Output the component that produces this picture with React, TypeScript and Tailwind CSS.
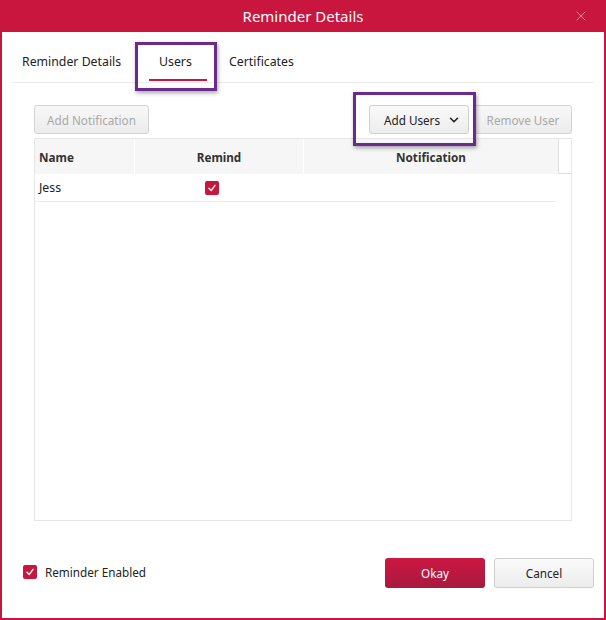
import React from 'react';
import { ChevronDown, X } from 'lucide-react';

const font = { fontFamily: '"Segoe UI", "Noto Sans", sans-serif' };

const Check: React.FC = () => (
    <div className="w-[14px] h-[14px] rounded-[2px] bg-[#c8163f] flex items-center justify-center">
        <svg width="10" height="10" viewBox="0 0 10 10">
            <path d="M2 5.2 L4.2 7.6 L8 2.4" fill="none" stroke="white" strokeWidth="1.4" strokeLinecap="round" strokeLinejoin="round" />
        </svg>
    </div>
);

const App: React.FC = () => {
    return (
        <div className="relative w-[606px] h-[620px] flex flex-col bg-white text-[12.3px] leading-[18px] text-[#222]" style={font}>
            {/* title bar */}
            <div className="relative h-[32px] bg-[#c8163f] flex items-center justify-center text-white text-[15px]">
                Reminder Details
                <X size={16} strokeWidth={1.2} className="absolute right-[17px] top-[8px] text-[#f2a6b8]" />
            </div>

            <div className="flex-1 flex flex-col border-x-2 border-b-2 border-[#c8163f] px-[10px]">
                {/* tabs */}
                <div className="h-[51px] flex items-start pt-[21px] border-b border-[#ececec]">
                    <div className="w-[119px] pl-[10px]">Reminder Details</div>
                    <div className="relative ml-[18px] w-[58px] pl-[10px]">
                        Users
                        <div className="absolute top-[26px] left-0 right-0 h-[2px] bg-[#c8163f]" />
                    </div>
                    <div className="ml-[12px] px-[10px]">Certificates</div>
                </div>

                {/* toolbar */}
                <div className="mt-[22px] px-[22px] flex items-center whitespace-nowrap text-[11.7px]">
                    <button className="h-[29px] w-[115px] rounded-[3px] border border-[#d4d4d4] bg-gradient-to-b from-[#f8f8f8] to-[#ececec] text-[#a8a8a8]">
                        Add Notification
                    </button>
                    <div className="flex-1" />
                    <button className="h-[29px] w-[100px] rounded-[3px] border border-[#cfcfcf] bg-gradient-to-b from-[#fafafa] to-[#ececec] flex items-center justify-between pl-[14px] pr-[7px]">
                        <span>Add Users</span>
                        <ChevronDown size={14} strokeWidth={2.8} />
                    </button>
                    <button className="ml-[5px] h-[29px] w-[98px] rounded-[3px] border border-[#d4d4d4] bg-gradient-to-b from-[#f8f8f8] to-[#ececec] text-[#a8a8a8]">
                        Remove User
                    </button>
                </div>

                {/* table */}
                <div className="mt-[4px] mx-[22px] h-[383px] border border-[#e6e6e6] flex flex-col">
                    <div className="h-[35px] flex font-bold text-[#333] text-[11.7px]">
                        <div className="w-[99px] bg-[#f6f6f6] flex items-center pl-[4px]">Name</div>
                        <div className="w-[169px] bg-[#f6f6f6] border-l border-white flex items-center justify-center">Remind</div>
                        <div className="w-[255px] bg-[#f6f6f6] border-l border-white flex items-center justify-center">Notification</div>
                        <div className="flex-1 border-l border-b border-[#e0e0e0]" />
                    </div>
                    <div className="mr-[14px] h-[28px] flex items-center border-b border-[#ececec] pt-[1px]">
                        <div className="w-[99px] pl-[4px]">Jess</div>
                        <div className="pl-[71px]">
                            <Check />
                        </div>
                    </div>
                </div>

                {/* footer */}
                <div className="mt-[37px] flex items-center text-[11.7px]">
                    <div className="pl-[11px] flex items-center gap-[8px] -mt-[2px]">
                        <Check />
                        <span>Reminder Enabled</span>
                    </div>
                    <div className="flex-1" />
                    <button className="h-[30px] w-[100px] rounded-[3px] bg-gradient-to-b from-[#cc1642] to-[#a81a3e] text-white">
                        Okay
                    </button>
                    <button className="ml-[9px] h-[30px] w-[100px] rounded-[3px] border border-[#cfcfcf] bg-gradient-to-b from-[#fafafa] to-[#ececec]">
                        Cancel
                    </button>
                </div>
            </div>

            {/* annotation boxes */}
            <div className="absolute left-[135px] top-[42px] w-[82px] h-[49px] border-[3px] border-[#6b2a8c] shadow-[1px_2px_4px_rgba(0,0,0,0.35)]" />
            <div className="absolute left-[353px] top-[92px] w-[123px] h-[54px] border-[3px] border-[#6b2a8c] shadow-[1px_2px_4px_rgba(0,0,0,0.35)]" />
        </div>
    );
};

export default App;
